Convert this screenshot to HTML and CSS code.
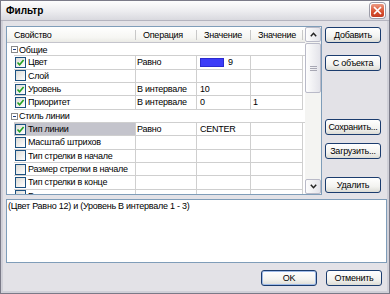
FILE: index.html
```html
<!DOCTYPE html>
<html lang="ru">
<head>
    <meta charset="UTF-8">
    <title>Фильтр</title>
    <link rel="stylesheet" href="styles.css">
</head>
<body>
    <div class="window">
        <div class="titlebar">
            <span class="title">Фильтр</span>
            <span class="close">
                <svg width="9" height="9" viewBox="0 0 9 9"><path d="M1 1 L8 8 M8 1 L1 8" stroke="#fff" stroke-width="1.7" fill="none"/></svg>
            </span>
        </div>
        <div class="body">
            <div class="top">
                <div class="grid">
                    <div class="main">
                        <div class="head">
                            <div class="h h1">Свойство</div>
                            <div class="h h2">Операция</div>
                            <div class="h h3">Значение</div>
                            <div class="h h4">Значение</div>
                        </div>
                        <div class="group"><span class="tree"></span>Общие</div>
                        <div class="row">
                            <div class="gut"></div>
                            <div class="c c1"><span class="chk on"><svg width="9" height="9" viewBox="0 0 9 9"><path d="M1.5 4.5 L3.6 6.8 L7.6 2" stroke="#21a121" stroke-width="1.6" fill="none"/></svg></span>Цвет</div>
                            <div class="c c2">Равно</div>
                            <div class="c c3"><span class="swatch"></span>9</div>
                            <div class="c c4"></div>
                        </div>
                        <div class="row">
                            <div class="gut"></div>
                            <div class="c c1"><span class="chk"></span>Слой</div>
                            <div class="c c2"></div>
                            <div class="c c3"></div>
                            <div class="c c4"></div>
                        </div>
                        <div class="row">
                            <div class="gut"></div>
                            <div class="c c1"><span class="chk on"><svg width="9" height="9" viewBox="0 0 9 9"><path d="M1.5 4.5 L3.6 6.8 L7.6 2" stroke="#21a121" stroke-width="1.6" fill="none"/></svg></span>Уровень</div>
                            <div class="c c2">В интервале</div>
                            <div class="c c3">10</div>
                            <div class="c c4"></div>
                        </div>
                        <div class="row">
                            <div class="gut"></div>
                            <div class="c c1"><span class="chk on"><svg width="9" height="9" viewBox="0 0 9 9"><path d="M1.5 4.5 L3.6 6.8 L7.6 2" stroke="#21a121" stroke-width="1.6" fill="none"/></svg></span>Приоритет</div>
                            <div class="c c2">В интервале</div>
                            <div class="c c3">0</div>
                            <div class="c c4">1</div>
                        </div>
                        <div class="group"><span class="tree"></span>Стиль линии</div>
                        <div class="row sel">
                            <div class="gut"></div>
                            <div class="c c1"><span class="chk on"><svg width="9" height="9" viewBox="0 0 9 9"><path d="M1.5 4.5 L3.6 6.8 L7.6 2" stroke="#21a121" stroke-width="1.6" fill="none"/></svg></span>Тип линии</div>
                            <div class="c c2">Равно</div>
                            <div class="c c3">CENTER</div>
                            <div class="c c4"></div>
                        </div>
                        <div class="row">
                            <div class="gut"></div>
                            <div class="c c1"><span class="chk"></span>Масштаб штрихов</div>
                            <div class="c c2"></div>
                            <div class="c c3"></div>
                            <div class="c c4"></div>
                        </div>
                        <div class="row">
                            <div class="gut"></div>
                            <div class="c c1"><span class="chk"></span>Тип стрелки в начале</div>
                            <div class="c c2"></div>
                            <div class="c c3"></div>
                            <div class="c c4"></div>
                        </div>
                        <div class="row">
                            <div class="gut"></div>
                            <div class="c c1"><span class="chk"></span>Размер стрелки в начале</div>
                            <div class="c c2"></div>
                            <div class="c c3"></div>
                            <div class="c c4"></div>
                        </div>
                        <div class="row">
                            <div class="gut"></div>
                            <div class="c c1"><span class="chk"></span>Тип стрелки в конце</div>
                            <div class="c c2"></div>
                            <div class="c c3"></div>
                            <div class="c c4"></div>
                        </div>
                        <div class="row">
                            <div class="gut"></div>
                            <div class="c c1"><span class="chk"></span>Размер стрелки в конце</div>
                            <div class="c c2"></div>
                            <div class="c c3"></div>
                            <div class="c c4"></div>
                        </div>
                    </div>
                    <div class="scroll">
                        <div class="sb-btn">
                            <svg width="7" height="5" viewBox="0 0 7 5"><path d="M0.8 4.2 L3.5 1.3 L6.2 4.2" stroke="#222" stroke-width="1.5" fill="none"/></svg>
                        </div>
                        <div class="thumb"><span class="grip"></span></div>
                        <div class="track"></div>
                        <div class="sb-btn">
                            <svg width="7" height="5" viewBox="0 0 7 5"><path d="M0.8 0.8 L3.5 3.7 L6.2 0.8" stroke="#222" stroke-width="1.5" fill="none"/></svg>
                        </div>
                    </div>
                </div>
                <div class="side">
                    <div class="btn b-add">Добавить</div>
                    <div class="btn b-obj">С объекта</div>
                    <div class="btn b-save">Сохранить...</div>
                    <div class="btn b-load">Загрузить...</div>
                    <div class="btn b-del">Удалить</div>
                </div>
            </div>
            <div class="expr">(Цвет Равно 12) и (Уровень В интервале 1 - 3)</div>
            <div class="foot">
                <div class="btn default">OK</div>
                <div class="btn">Отменить</div>
            </div>
        </div>
    </div>
</body>
</html>
```

FILE: styles.css
```css
* {
    margin: 0;
    padding: 0;
    box-sizing: border-box;
}
body {
    width: 390px;
    height: 294px;
    overflow: hidden;
    font-family: "Liberation Sans", Arial, sans-serif;
    font-size: 9px;
    letter-spacing: -0.25px;
    color: #000;
    background: #e3e2e7;
}
.window {
    display: flex;
    flex-direction: column;
    width: 390px;
    height: 294px;
    border: 1px solid #7a7a88;
}
.titlebar {
    display: flex;
    align-items: center;
    justify-content: space-between;
    height: 20px;
    padding: 0 4px 0 5px;
    background: linear-gradient(#fdfdfd, #ececef 55%, #d9d9df);
    border-bottom: 1px solid #b4b4bf;
}
.title {
    font-size: 10px;
    font-weight: bold;
    letter-spacing: 0;
}
.close {
    display: flex;
    align-items: center;
    justify-content: center;
    width: 15px;
    height: 15px;
    border: 1px solid #fff;
    border-radius: 3px;
    background: linear-gradient(#ec9a82, #d8502f 60%, #c43c22);
    box-shadow: 0 0 0 1px #9c9ca8;
}
.body {
    flex: 1;
    padding: 5px 0 0 3px;
    border: 2px solid #d0d0d8;
    border-top: none;
}
.top {
    display: flex;
}
/* таблица свойств */
.grid {
    display: flex;
    width: 316px;
    height: 169px;
    border: 1px solid #7f9db9;
    background: #fff;
    overflow: hidden;
}
.main {
    width: 298px;
    overflow: hidden;
}
.head {
    display: flex;
    height: 16px;
    padding: 3px 0 2px;
    background: linear-gradient(#fff, #f6f6f3 70%, #ebebe6);
    border-bottom: 1px solid #c4c4cc;
}
.h {
    padding-left: 7px;
    line-height: 10px;
    border-right: 1px solid #c8c8c8;
    white-space: nowrap;
}
.h1 { width: 129px; }
.h2 { width: 61px; }
.h3 { width: 54px; }
.h4 { width: 52px; }
.group {
    display: flex;
    align-items: center;
    height: 13.33px;
    padding-left: 4px;
    background: linear-gradient(#cfcfcf, #cfcfcf) 7px 100% / 291px 1px no-repeat;
}
.tree {
    display: flex;
    align-items: center;
    justify-content: center;
    width: 7px;
    height: 7px;
    margin-right: 1px;
    border: 1px solid #8a8a8a;
    background: #fff;
}
.tree::before {
    content: "";
    width: 3px;
    height: 1px;
    background: #1c3c80;
}
.row {
    display: flex;
    height: 13.33px;
}
.gut {
    width: 7px;
}
.c {
    display: flex;
    align-items: center;
    border-right: 1px solid #cfcfcf;
    border-bottom: 1px solid #cfcfcf;
    white-space: nowrap;
    overflow: hidden;
}
.c1 { width: 122px; padding-left: 1px; }
.c2 { width: 61px; padding-left: 1px; }
.c3 { width: 54px; padding-left: 3px; }
.c4 { width: 52px; padding-left: 2px; }
.sel .c1 {
    background: #c4c4cc;
}
.chk {
    display: flex;
    align-items: center;
    justify-content: center;
    flex: none;
    width: 11px;
    height: 11px;
    margin-right: 2px;
    border: 1px solid #1c5180;
    background: linear-gradient(135deg, #dcdcd7, #fff);
}
.swatch {
    width: 24px;
    height: 9px;
    margin-right: 4px;
    background: #3c3cf8;
    border: 1px solid #2a2ad0;
}
/* полоса прокрутки */
.scroll {
    display: flex;
    flex-direction: column;
    width: 16px;
    background: #f4f4f2;
}
.sb-btn,
.thumb {
    display: flex;
    align-items: center;
    justify-content: center;
    border: 1px solid #b9bac8;
    border-radius: 2px;
    background: linear-gradient(90deg, #fdfdfd, #e4e4ea);
}
.sb-btn {
    height: 15px;
}
.thumb {
    height: 50px;
    margin-top: 1px;
}
.grip {
    width: 7px;
    height: 5px;
    border-top: 1px solid #a8a8b4;
    border-bottom: 1px solid #a8a8b4;
    background: linear-gradient(#a8a8b4, #a8a8b4) 0 50% / 100% 1px no-repeat;
}
.track {
    flex: 1;
}
/* кнопки */
.side {
    display: flex;
    flex-direction: column;
    margin-left: 3px;
    padding-top: 1px;
}
.btn {
    display: flex;
    align-items: center;
    justify-content: center;
    width: 56px;
    height: 16px;
    border: 1px solid #1b3c6e;
    border-radius: 3px;
    background: linear-gradient(#fff, #f3f3f0 60%, #dcdcd6);
    white-space: nowrap;
}
.b-obj { margin-top: 12px; }
.b-save { margin-top: 48px; }
.b-load { margin-top: 8px; }
.b-del { margin-top: 18px; }
.default {
    box-shadow: inset 0 0 0 1px #9fbbe8;
}
.expr {
    width: 381px;
    height: 64px;
    margin-top: 4px;
    padding: 1px 1px;
    line-height: 11px;
    border: 1px solid #7f9db9;
    background: #fff;
}
.foot {
    display: flex;
    justify-content: flex-end;
    gap: 9px;
    margin-top: 7px;
    padding-right: 5px;
}
```
